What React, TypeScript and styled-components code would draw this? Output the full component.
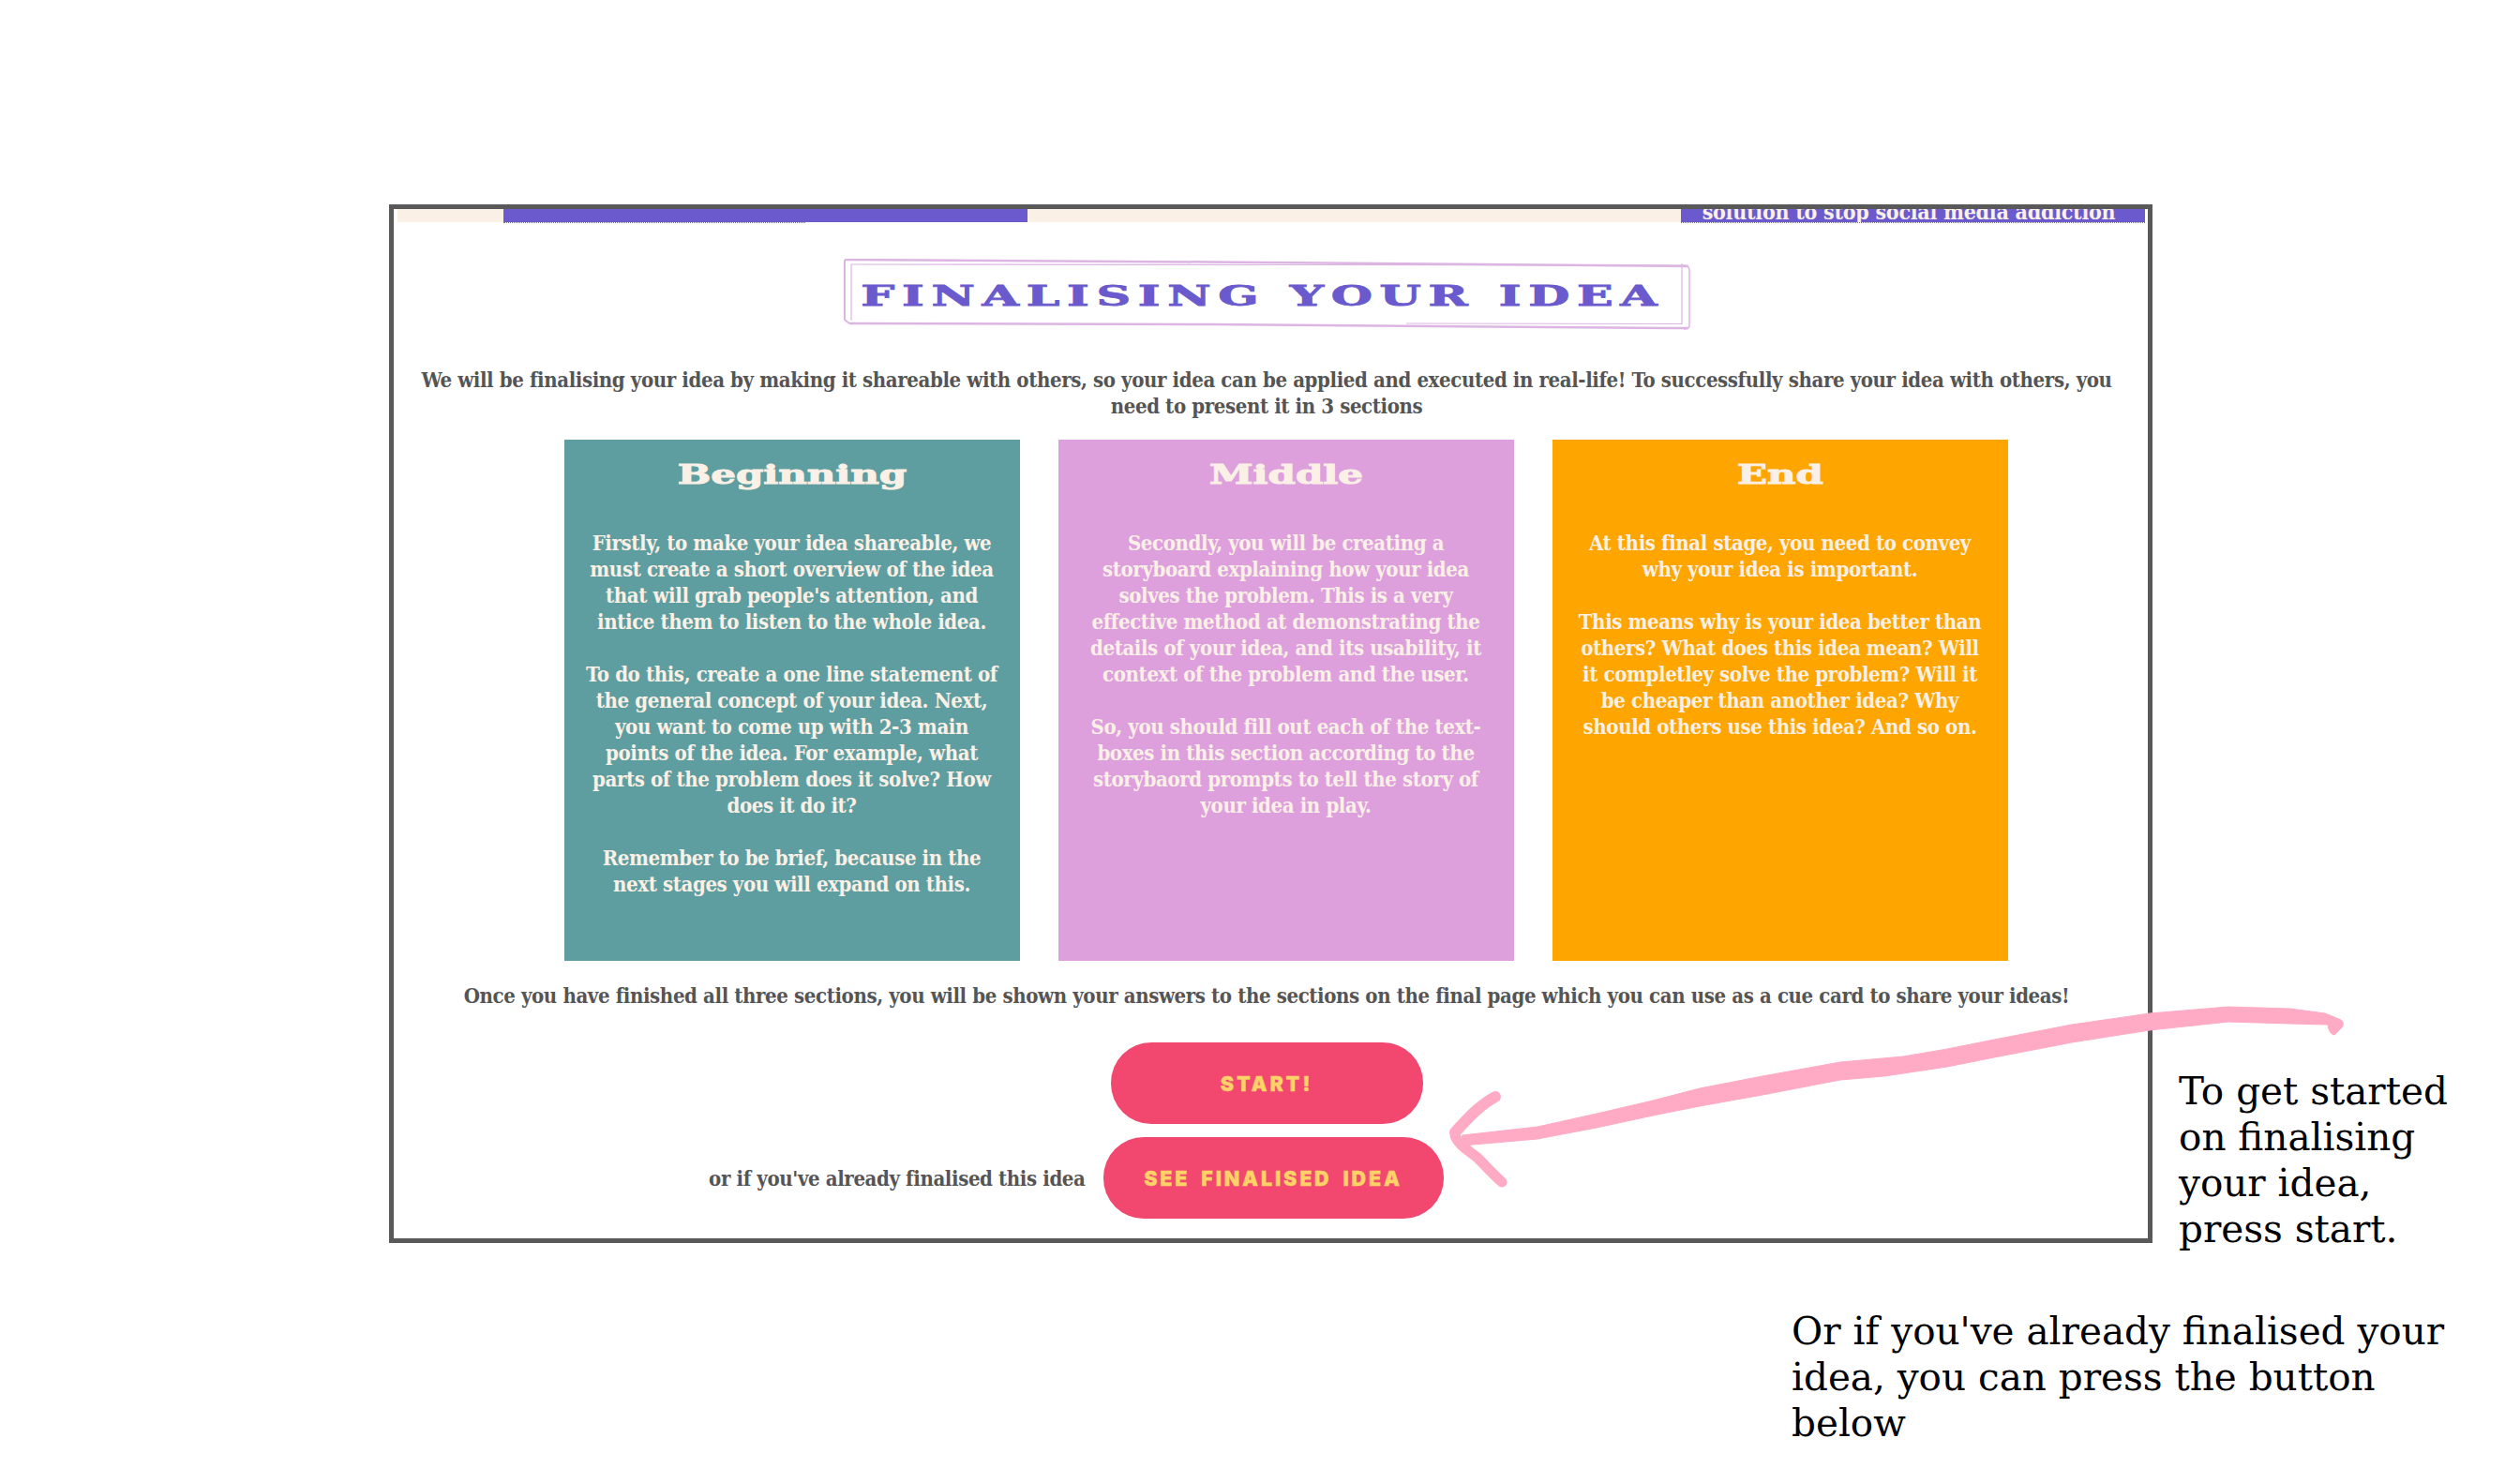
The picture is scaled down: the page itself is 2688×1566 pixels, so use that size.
import React from "react"
import styled, { createGlobalStyle } from "styled-components"

const GlobalStyle = createGlobalStyle`
  html, body {
    margin: 0;
    padding: 0;
    background: #ffffff;
  }
`

const slab = `"DejaVu Serif Condensed", "DejaVu Serif", serif`

const Page = styled.div`
  position: relative;
  box-sizing: border-box;
  width: 2688px;
  height: 1566px;
  overflow: hidden;
  padding: 218px 0 0 415px;
  background: #ffffff;
`

const Top = styled.div`
  display: flex;
  align-items: flex-end;
  gap: 28px;
`

const Frame = styled.main`
  box-sizing: border-box;
  width: 1881px;
  height: 1108px;
  flex: none;
  border: 5px solid #595959;
  overflow: hidden;
  padding: 0 3px 0 4px;
`

const Strip = styled.div`
  display: flex;
  height: 14px;
  padding-left: 113px;
  gap: 697px;
  background: #faf0e6;
`

const Tab = styled.div<{ $w: number; $rule: number }>`
  position: relative;
  flex: none;
  width: ${(p) => p.$w}px;
  height: 14px;
  background: #6a5acd;
  color: #faf0e6;
  font: 700 23px/14px ${slab};
  letter-spacing: -0.25px;
  text-align: center;
  white-space: nowrap;

  &::after {
    content: "";
    position: absolute;
    top: 14px;
    left: 0;
    width: ${(p) => p.$rule}px;
    border-top: 1px dotted #777777;
  }
`

const TabLabel = styled.div`
  height: 14px;
  padding-right: 9px;
  overflow: hidden;
  line-height: 6px;
`

const Content = styled.div`
  display: flex;
  flex-direction: column;
  align-items: center;
  padding-right: 10px;
  color: #555555;
  font: 700 22px/28px ${slab};
  letter-spacing: -0.38px;
`

const TitleBox = styled.div`
  position: relative;
  box-sizing: border-box;
  display: flex;
  align-items: center;
  justify-content: center;
  width: 903px;
  height: 76px;
  margin-top: 39px;
`

const TitleSketch = styled.svg`
  position: absolute;
  inset: 0;
`

const Title = styled.h1`
  margin: 4px 8px 0 0;
  color: #6a5acd;
  font: 900 29px/1 "DejaVu Serif", serif;
  letter-spacing: 4.4px;
  -webkit-text-stroke: 0.8px #6a5acd;
  white-space: nowrap;
  transform: scaleX(1.75);
`

const Intro = styled.p`
  margin: 39px 0 0;
  text-align: center;
  white-space: pre-line;
`

const Cards = styled.div`
  display: flex;
  gap: 41px;
  margin: 22px 0 0 41px;
`

const Card = styled.section<{ $bg: string }>`
  box-sizing: border-box;
  width: 486px;
  height: 556px;
  padding: 23px 0 0;
  background: ${(p) => p.$bg};
  color: #faf0e6;
  text-align: center;
`

const CardTitle = styled.h2`
  margin: 0;
  font: 900 28px/30px "DejaVu Serif", serif;
  letter-spacing: 0;
  -webkit-text-stroke: 1px #faf0e6;
  transform: scaleX(1.5);
`

const CardBody = styled.p`
  margin: 43px 0 0;
  white-space: pre-line;
`

const Closing = styled.p`
  margin: 23px 0 0;
  text-align: center;
`

const Button = styled.button<{ $w: number }>`
  box-sizing: border-box;
  width: ${(p) => p.$w}px;
  height: 87px;
  padding: 2px 0 0;
  border: 0;
  border-radius: 43px;
  background: #f24870;
  color: #ffd166;
  font: 900 21.5px/1 Inter, "Liberation Sans", sans-serif;
  letter-spacing: 2.8px;
  word-spacing: 5px;
  -webkit-text-stroke: 0.3px #ffd166;
`

const StartRow = styled.div`
  margin-top: 36px;
`

const FinalRow = styled.div`
  display: grid;
  grid-template-columns: 1fr auto 1fr;
  align-items: center;
  gap: 19px;
  width: 1400px;
  margin: 14px 0 0 14px;
`

const FinalLabel = styled.span`
  justify-self: end;
`

const Note = styled.p`
  margin: 0;
  color: #000000;
  font: 400 40.5px/49px "DejaVu Serif", serif;
  white-space: pre-line;
`

const SideNote = styled(Note)`
  margin-bottom: -10px;
`

const LowerNote = styled(Note)`
  margin: 70px 0 0 1496px;
`

const Arrow = styled.svg`
  position: absolute;
  top: 0;
  left: 0;
  pointer-events: none;
`

const cards = [
  {
    bg: "#5f9ea0",
    title: "Beginning",
    body: "Firstly, to make your idea shareable, we\nmust create a short overview of the idea\nthat will grab people's attention, and\nintice them to listen to the whole idea.\n\nTo do this, create a one line statement of\nthe general concept of your idea. Next,\nyou want to come up with 2-3 main\npoints of the idea. For example, what\nparts of the problem does it solve? How\ndoes it do it?\n\nRemember to be brief, because in the\nnext stages you will expand on this.",
  },
  {
    bg: "#dda0dd",
    title: "Middle",
    body: "Secondly, you will be creating a\nstoryboard explaining how your idea\nsolves the problem. This is a very\neffective method at demonstrating the\ndetails of your idea, and its usability, it\ncontext of the problem and the user.\n\nSo, you should fill out each of the text-\nboxes in this section according to the\nstorybaord prompts to tell the story of\nyour idea in play.",
  },
  {
    bg: "#ffa500",
    title: "End",
    body: "At this final stage, you need to convey\nwhy your idea is important.\n\nThis means why is your idea better than\nothers? What does this idea mean? Will\nit completley solve the problem? Will it\nbe cheaper than another idea? Why\nshould others use this idea? And so on.",
  },
]

// hand-drawn shaft, traced as an outline because its width changes along the way
const shaft =
  "M1560 1211 L1640 1202 L1703 1188 L1763 1174 L1813 1161 L1880 1148 L1963 1133 L2030 1127 L2077 1119 L2127 1109 L2210 1093 L2293 1081 L2377 1074 L2443 1076 L2480 1081 L2497 1088 Q2502 1092 2497 1097 L2490 1104 Q2484 1103 2483 1093 L2443 1092 L2377 1090 L2293 1099 L2210 1112 L2127 1128 L2077 1138 L2010 1148 L1963 1152 L1880 1168 L1813 1180 L1763 1190 L1703 1203 L1640 1215 L1560 1222 Z"

export default function App() {
  return (
    <Page>
      <GlobalStyle />
      <Top>
        <Frame>
          <Strip>
            <Tab $w={559} $rule={322} />
            <Tab $w={495} $rule={495}>
              <TabLabel>solution to stop social media addiction</TabLabel>
            </Tab>
          </Strip>
          <Content>
            <TitleBox>
              <TitleSketch width="903" height="76" viewBox="0 0 903 76" fill="none" stroke="#dcb5e3">
                <path d="M1 1 L391 3.5 L901 8" strokeWidth="2.5" />
                <path d="M8 6 L500 6.5 L894 7" strokeWidth="1.2" />
                <path d="M1 1 L1 65 L6 69" strokeWidth="2" />
                <path d="M8 6 L8 66" strokeWidth="1.2" />
                <path d="M6 69 L391 70 L880 74 L901 74" strokeWidth="2.5" />
                <path d="M600 69 L894 69.5" strokeWidth="1" />
                <path d="M894 5 L894 70" strokeWidth="1.2" />
                <path d="M895 7 Q902 7 902 12 L902 72 Q902 75 896 75" strokeWidth="1.5" />
              </TitleSketch>
              <Title>FINALISING YOUR IDEA</Title>
            </TitleBox>
            <Intro>
              {"We will be finalising your idea by making it shareable with others, so your idea can be applied and executed in real-life! To successfully share your idea with others, you\nneed to present it in 3 sections"}
            </Intro>
            <Cards>
              {cards.map((c) => (
                <Card key={c.title} $bg={c.bg}>
                  <CardTitle>{c.title}</CardTitle>
                  <CardBody>{c.body}</CardBody>
                </Card>
              ))}
            </Cards>
            <Closing>
              Once you have finished all three sections, you will be shown your answers to the sections on the final page which you can use as a cue card to share your ideas!
            </Closing>
            <StartRow>
              <Button $w={333}>START!</Button>
            </StartRow>
            <FinalRow>
              <FinalLabel>or if you've already finalised this idea</FinalLabel>
              <Button $w={363}>SEE FINALISED IDEA</Button>
            </FinalRow>
          </Content>
        </Frame>
        <SideNote>{"To get started\non finalising\nyour idea,\npress start."}</SideNote>
      </Top>
      <LowerNote>{"Or if you've already finalised your\nidea, you can press the button\nbelow"}</LowerNote>
      <Arrow width="2688" height="1566" viewBox="0 0 2688 1566" fill="none" stroke="#ffabc6" strokeLinecap="round" strokeLinejoin="round">
        <path d={shaft} fill="#ffabc6" strokeWidth="1" />
        <path d="M1595 1170 C1580 1178 1568 1190 1552 1208" strokeWidth="12" />
        <path d="M1552 1212 C1558 1224 1568 1228 1576 1235 C1585 1244 1592 1252 1602 1261" strokeWidth="11" />
      </Arrow>
    </Page>
  )
}
